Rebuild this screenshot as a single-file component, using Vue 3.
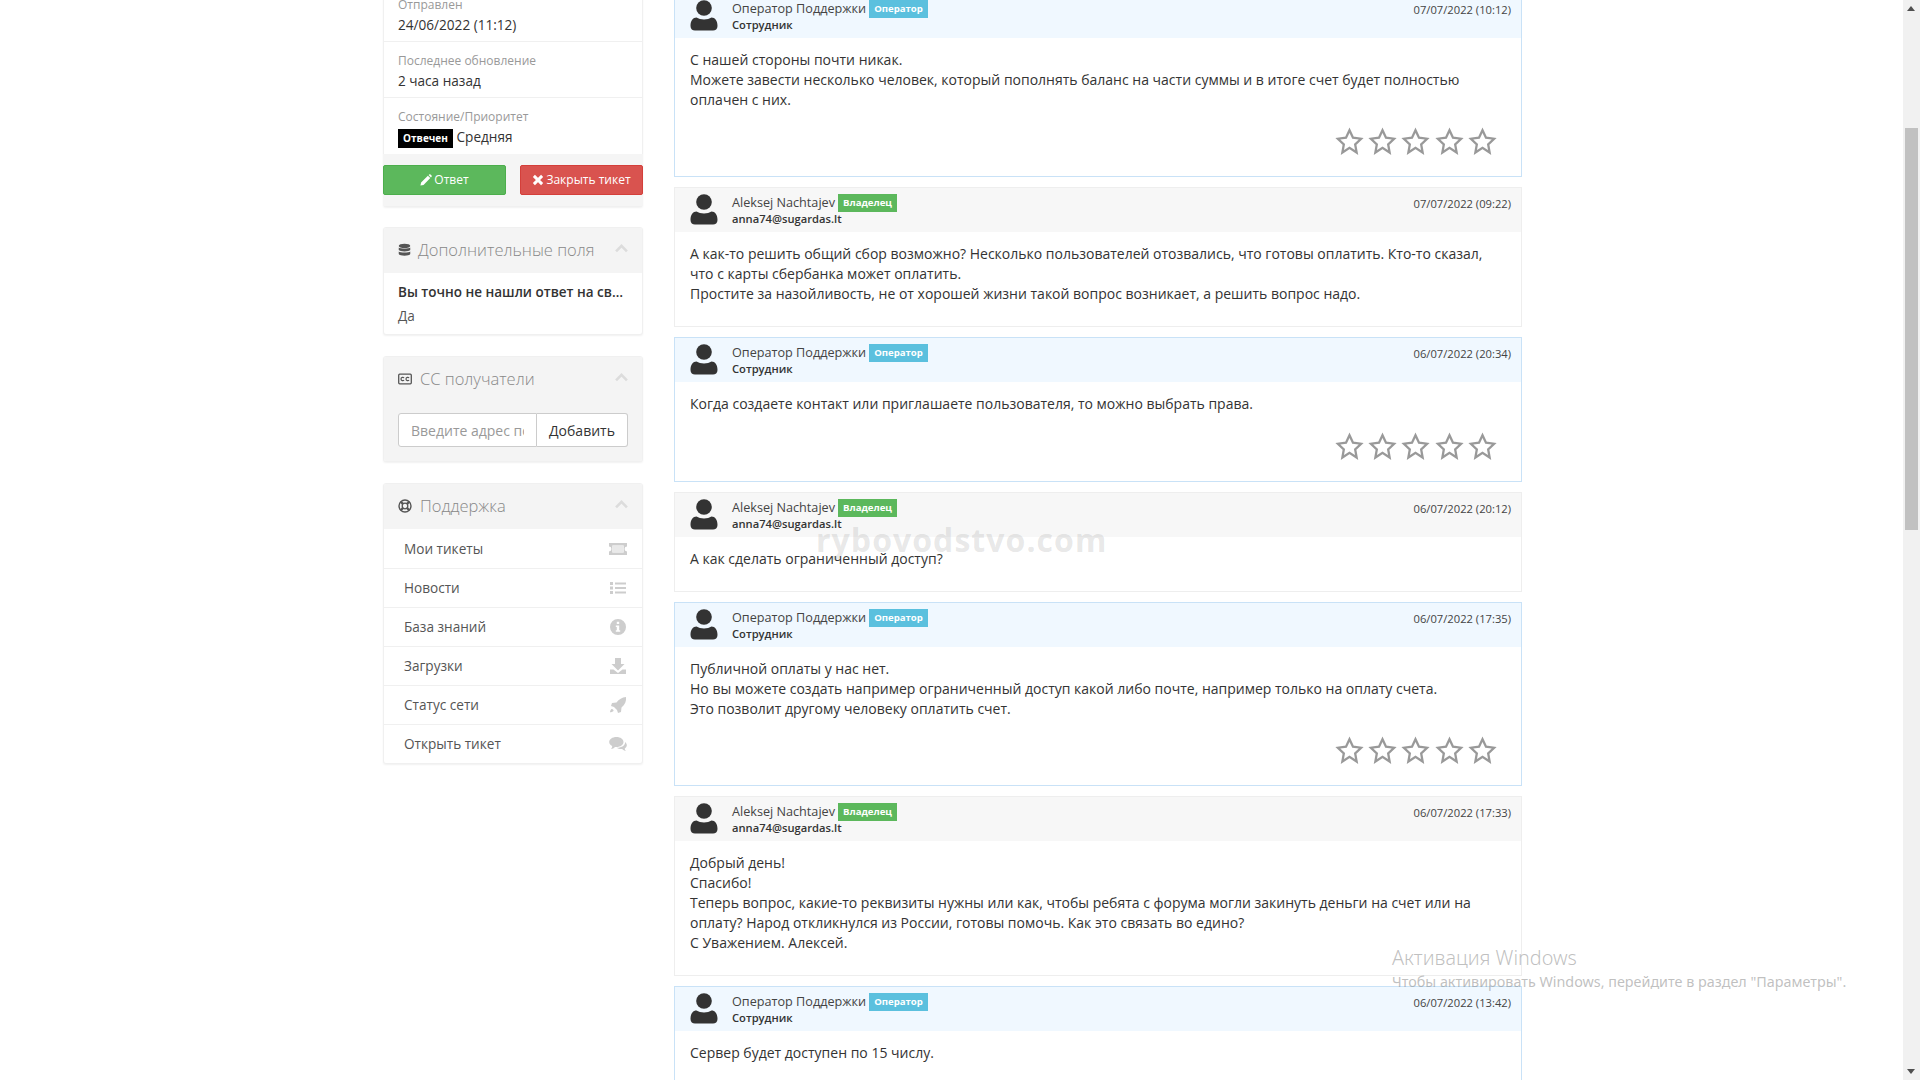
<script setup>
const info = [
  { label: 'Отправлен', value: '24/06/2022 (11:12)' },
  { label: 'Последнее обновление', value: '2 часа назад' },
]
const links = [
  { text: 'Мои тикеты', icon: 'ticket' },
  { text: 'Новости', icon: 'list' },
  { text: 'База знаний', icon: 'info' },
  { text: 'Загрузки', icon: 'download' },
  { text: 'Статус сети', icon: 'rocket' },
  { text: 'Открыть тикет', icon: 'comments' },
]
const op = { name: 'Оператор Поддержки', badge: 'Оператор', sub: 'Сотрудник', staff: true }
const owner = { name: 'Aleksej Nachtajev', badge: 'Владелец', sub: 'anna74@sugardas.lt', staff: false }
const messages = [
  { who: op, date: '07/07/2022 (10:12)', lines: ['С нашей стороны почти никак.', 'Можете завести несколько человек, который пополнять баланс на части суммы и в итоге счет будет полностью оплачен с них.'] },
  { who: owner, date: '07/07/2022 (09:22)', lines: ['А как-то решить общий сбор возможно? Несколько пользователей отозвались, что готовы оплатить. Кто-то сказал, что с карты сбербанка может оплатить.', 'Простите за назойливость, не от хорошей жизни такой вопрос возникает, а решить вопрос надо.'] },
  { who: op, date: '06/07/2022 (20:34)', lines: ['Когда создаете контакт или приглашаете пользователя, то можно выбрать права.'] },
  { who: owner, date: '06/07/2022 (20:12)', lines: ['А как сделать ограниченный доступ?'] },
  { who: op, date: '06/07/2022 (17:35)', lines: ['Публичной оплаты у нас нет.', 'Но вы можете создать например ограниченный доступ какой либо почте, например только на оплату счета.', 'Это позволит другому человеку оплатить счет.'] },
  { who: owner, date: '06/07/2022 (17:33)', lines: ['Добрый день!', 'Спасибо!', 'Теперь вопрос, какие-то реквизиты нужны или как, чтобы ребята с форума могли закинуть деньги на счет или на оплату? Народ откликнулся из России, готовы помочь. Как это связать во едино?', 'С Уважением. Алексей.'] },
  { who: op, date: '06/07/2022 (13:42)', lines: ['Сервер будет доступен по 15 числу.'] },
]
const starPath = 'M12 2.6l2.9 6.2 6.7.9-4.9 4.7 1.2 6.7L12 17.2l-5.9 3.9 1.2-6.7-4.9-4.7 6.7-.9z'
</script>

<template>
  <div class="page">
    <div class="content">
      <aside class="sidebar">
        <section class="card">
          <div v-for="row in info" :key="row.label" class="info-row">
            <div class="info-label">{{ row.label }}</div>
            <div class="info-value">{{ row.value }}</div>
          </div>
          <div class="info-row status-row">
            <div class="info-label">Состояние/Приоритет</div>
            <div class="info-value"><span class="status">Отвечен</span> Средняя</div>
          </div>
          <div class="actions">
            <button class="btn green">
              <svg class="btn-icon" viewBox="0 0 14 14"><path fill="currentColor" d="M0.5 13.5l0.8-3.6L9.2 2l2.8 2.8-7.9 7.9zM10 1.2l0.8-0.7c0.4-0.4 1-0.4 1.4 0l1.3 1.3c0.4 0.4 0.4 1 0 1.4l-0.7 0.8z"/></svg>
              Ответ
            </button>
            <button class="btn red">
              <svg class="btn-icon" viewBox="0 0 14 14"><path fill="none" stroke="currentColor" stroke-width="3.4" d="M2.2 2.2l9.6 9.6M11.8 2.2l-9.6 9.6"/></svg>
              Закрыть тикет
            </button>
          </div>
        </section>

        <section class="card">
          <header class="panel-head">
            <svg class="head-icon db" viewBox="0 0 14 14"><g fill="#555"><ellipse cx="7" cy="2.6" rx="6.2" ry="2.4"/><path d="M.8 4.4c1 1.6 11.4 1.6 12.4 0v2.600c-1 2-11.4 2-12.4 0z"/><path d="M.8 8.600c1 1.600 11.400 1.600 12.400 0v2.600c-.6 2.600-11.800 2.600-12.400 0z"/></g></svg>
            <span class="head-title">Дополнительные поля</span>
            <svg class="chev" viewBox="0 0 12 8"><path fill="none" stroke="#dcdcdc" stroke-width="2.400" d="M1 6.600l5-5 5 5"/></svg>
          </header>
          <div class="field-body">
            <div class="field-name">Вы точно не нашли ответ на свой вопрос в базе знаний?</div>
            <div class="field-value">Да</div>
          </div>
        </section>

        <section class="card">
          <header class="panel-head">
            <svg class="head-icon cc" viewBox="0 0 14 12"><rect x=".7" y="1.200" width="12.600" height="9.600" rx="1" fill="none" stroke="#555" stroke-width="1.300"/><path fill="none" stroke="#555" stroke-width="1.200" d="M6 5c-.6-1-3-1-3 1s2.400 2 3 1M11 5c-.6-1-3-1-3 1s2.400 2 3 1"/></svg>
            <span class="head-title">CC получатели</span>
            <svg class="chev" viewBox="0 0 12 8"><path fill="none" stroke="#dcdcdc" stroke-width="2.400" d="M1 6.600l5-5 5 5"/></svg>
          </header>
          <div class="cc-body">
            <input class="cc-input" placeholder="Введите адрес почты" />
            <button class="cc-add">Добавить</button>
          </div>
        </section>

        <section class="card">
          <header class="panel-head">
            <svg class="head-icon ring" viewBox="0 0 14 14"><circle cx="7" cy="7" r="6" fill="none" stroke="#555" stroke-width="1.400"/><circle cx="7" cy="7" r="2.800" fill="none" stroke="#555" stroke-width="1.300"/><path stroke="#555" stroke-width="2.200" d="M2.800 2.800l2.300 2.300M11.200 2.800L8.900 5.100M2.800 11.200l2.300-2.300M11.200 11.200L8.900 8.900"/></svg>
            <span class="head-title">Поддержка</span>
            <svg class="chev" viewBox="0 0 12 8"><path fill="none" stroke="#dcdcdc" stroke-width="2.400" d="M1 6.600l5-5 5 5"/></svg>
          </header>
          <nav class="links">
            <a v-for="l in links" :key="l.text" class="link">
              <span>{{ l.text }}</span>
              <svg class="link-icon" viewBox="0 0 18 16" fill="#cdcdcd">
                <g v-if="l.icon === 'ticket'">
                  <path fill-rule="evenodd" d="M0 2h18v3.600a2.400 2.400 0 0 0 0 4.800V14H0v-3.600a2.400 2.400 0 0 0 0-4.800zM3.400 4.600v6.800h11.200V4.600z"/>
                  <rect x="3.400" y="4.600" width="11.200" height="6.800" fill="#e9e9e9"/>
                </g>
                <path v-else-if="l.icon === 'list'" d="M1 2h3v3H1zM6 2.500h11v2H6zM1 6.500h3v3H1zM6 7h11v2H6zM1 11h3v3H1zM6 11.500h11v2H6z"/>
                <path v-else-if="l.icon === 'info'" fill-rule="evenodd" d="M9 0a8 8 0 1 1 0 16A8 8 0 0 1 9 0zM7.800 2.800v2.200h2.400V2.800zM6.800 6.500v1.500h1v3.200h-1v1.500h4.400v-1.500h-1V6.500z"/>
                <path v-else-if="l.icon === 'download'" d="M6 0h6v6h3.500L9 12.500 2.500 6H6zM1 11.500h3.500L9 15l4.500-3.500H17V16H1z"/>
                <path v-else-if="l.icon === 'rocket'" d="M17 0c.5 4-1 8-4.500 10.500L12 15l-3 1-1-3-3-3-3-1 1-3 4.500-.5C10 2 13 .5 17 0zM2.500 12c1-.5 2.500 1 2 2-.8 1-2.500 1.200-3.500 1.200 0-1 .5-2.500 1.500-3.200z"/>
                <path v-else d="M7.500 1c4 0 7 2.200 7 5s-3 5-7 5l-1.500-.1C5 12 3.500 12.800 2 13c.7-.8 1.200-1.800 1.200-3C1.300 9 .2 7.600.2 6c0-2.800 3.200-5 7.300-5zM16 6c1.200 1 1.800 2 1.800 3.200 0 1.300-.8 2.400-2 3.200 0 1 .5 2 1.200 2.600-1.500-.2-3-1-3.800-2-2 .3-4.200-.3-5.500-1.200 4.500.2 9-2.400 8.300-5.800z"/>
              </svg>
            </a>
          </nav>
        </section>
      </aside>

      <main class="thread">
        <article v-for="m in messages" :key="m.date" class="msg" :class="{ staff: m.who.staff }">
          <header class="msg-head">
            <svg class="avatar" viewBox="0 0 28 31"><circle cx="14" cy="8" r="7.800" fill="#333"/><path fill="#333" d="M0.500 26c0-5.500 2.500-8.500 6-8.500 2 1.300 4.500 2 7.500 2s5.500-.7 7.500-2c3.500 0 6 3 6 8.500 0 3-2 4.500-4.500 4.500H5c-2.500 0-4.500-1.500-4.500-4.500z"/></svg>
            <div class="who">
              <div class="who-name">
                <span>{{ m.who.name }}</span>
                <span class="role">{{ m.who.badge }}</span>
              </div>
              <div class="who-sub">{{ m.who.sub }}</div>
            </div>
            <time class="date">{{ m.date }}</time>
          </header>
          <div class="msg-body">
            <div v-for="(line, i) in m.lines" :key="i">{{ line }}</div>
            <div v-if="m.who.staff" class="stars">
              <svg v-for="n in 5" :key="n" class="star" viewBox="0 0 24 24"><path :d="starPath" fill="none" stroke="#999" stroke-width="1.900" stroke-linejoin="miter"/></svg>
            </div>
          </div>
        </article>
      </main>
    </div>

    <div class="scrollbar">
      <span class="arrow up"></span>
      <span class="thumb"></span>
      <span class="arrow down"></span>
    </div>

    <div class="watermark">rybovodstvo.com</div>
    <div class="activation">
      <div class="act-title">Активация Windows</div>
      <div class="act-sub">Чтобы активировать Windows, перейдите в раздел "Параметры".</div>
    </div>
  </div>
</template>

<style>
html, body { margin: 0; background: #fff; overflow: hidden; }
</style>

<style scoped>
.page {
  position: relative;
  width: 1920px;
  height: 1080px;
  overflow: hidden;
  display: flex;
  background: #fff;
  color: #333;
  font-family: "Open Sans", "Noto Sans", sans-serif;
  font-size: 14px;
  line-height: 20px;
}
.content {
  flex: 1;
  display: flex;
  align-items: flex-start;
  gap: 31px;
  padding-left: 383px;
  margin-top: -15px;
}
.sidebar { width: 260px; display: flex; flex-direction: column; gap: 20px; flex: none; font-size: 13.600px; }
.card {
  background: #fff;
  border: 1px solid #f0f0f0;
  border-radius: 3px;
  box-shadow: 0 1px 2px rgba(0,0,0,.06);
  box-sizing: border-box;
}
.card + .card + .card { margin-top: 1px; }
.info-row {
  height: 56px;
  box-sizing: border-box;
  padding: 10px 14px 0;
  border-bottom: 1px solid #f0f0f0;
}
.status-row { border-bottom: 0; }
.info-label { color: #999; font-size: 12px; line-height: 18px; }
.info-value { line-height: 22px; }
.status {
  display: inline-block;
  background: #000;
  color: #fff;
  font-size: 10px;
  font-weight: 700;
  line-height: 19px;
  width: 55px;
  text-align: center;
  margin: 0;
  vertical-align: 0;
}
.actions {
  background: #f5f5f5;
  display: flex;
  justify-content: space-between;
  padding: 11px 0;
  margin: 0 -1px;
}
.btn {
  width: 123px;
  height: 30px;
  border: 1px solid transparent;
  border-radius: 2px;
  color: #fff;
  font: 12px/18px "Open Sans", sans-serif;
  padding: 0;
  display: flex;
  align-items: center;
  justify-content: center;
  gap: 2px;
}
.btn-icon { width: 12px; height: 12px; }
.green { background: #5cb85c; border-color: #4cae4c; }
.red { background: #d9534f; border-color: #d43f3a; }
.panel-head {
  height: 45px;
  background: #f4f4f4;
  border-radius: 2px 2px 0 0;
  display: flex;
  align-items: center;
  padding: 0 14px 1px;
  box-sizing: border-box;
  position: relative;
}
.head-title { color: #888; font-size: 16.500px; font-weight: 300; margin-left: 7px; }
.head-icon { flex: none; }
.db { width: 13px; height: 14px; }
.cc { width: 14px; height: 12px; margin-right: 1px; }
.ring { width: 14px; height: 14px; margin-right: 1px; }
.chev { position: absolute; right: 14px; top: 16px; width: 13px; height: 9px; }
.field-body { padding: 7px 14px 6px; }
.field-name {
  font-weight: 600;
  font-size: 13.500px;
  line-height: 24px;
  white-space: nowrap;
  overflow: hidden;
  text-overflow: ellipsis;
}
.field-value { line-height: 24px; color: #555; }
.cc-body {
  background: #f4f4f4;
  padding: 11px 14px 14px;
  display: flex;
  border-radius: 0 0 2px 2px;
}
.cc-input {
  width: 139px;
  height: 34px;
  box-sizing: border-box;
  border: 1px solid #ccc;
  border-radius: 3px 0 0 3px;
  padding: 0 12px;
  font: 14px "Open Sans", sans-serif;
  outline: none;
  background: #fff;
}
.cc-input::placeholder { color: #999; opacity: 1; }
.cc-add {
  flex: 1;
  height: 34px;
  border: 1px solid #ccc;
  border-left: 0;
  border-radius: 0 3px 3px 0;
  background: #fff;
  color: #333;
  font: 14px "Open Sans", sans-serif;
  padding: 0;
}
.links { display: flex; flex-direction: column; }
.link {
  height: 39px;
  box-sizing: border-box;
  padding: 0 15px 0 20px;
  display: flex;
  align-items: center;
  justify-content: space-between;
  color: #555;
  border-top: 1px solid #f0f0f0;
}
.link:first-child { border-top: 0; }
.link-icon { width: 18px; height: 16px; }

.thread { width: 848px; flex: none; display: flex; flex-direction: column; gap: 10px; padding-top: 7.500px; }
.msg { border: 1px solid #eee; background: #fff; box-sizing: border-box; }
.msg.staff { border-color: #c9e2f7; }
.msg-head {
  height: 44px;
  background: #f7f7f7;
  display: flex;
  align-items: flex-start;
  padding: 0 10px 0 15px;
  box-sizing: border-box;
}
.msg.staff .msg-head { background: #f0f8ff; }
.avatar { width: 28px; height: 31px; flex: none; margin-top: 6px; }
.who { margin-left: 14px; margin-top: 4px; }
.who-name { display: flex; align-items: flex-start; gap: 3px; line-height: 20px; color: #444; font-size: 12.650px; }
.role {
  color: #fff;
  font-size: 9.600px;
  font-weight: 700;
  line-height: 18px;
  padding: 0 5px;
  background: #5cb85c;
  margin-top: 2px;
}
.msg.staff .role { background: #5bc0de; }
.who-sub { font-size: 11.200px; font-weight: 600; line-height: 14px; color: #333; }
.date { margin-left: auto; font-size: 11.200px; margin-top: 6px; color: #444; }
.msg-body { padding: 12px 15px 22px; color: #333; }
.msg.staff .msg-body { padding-bottom: 18.500px; }
.stars { display: flex; justify-content: flex-end; align-items: center; gap: 4.300px; margin-top: 16px; padding-right: 9px; height: 32px; }
.star { width: 29px; height: 29px; }
.scrollbar {
  position: relative;
  width: 17px;
  flex: none;
  background: #f1f1f1;
}
.thumb { position: absolute; left: 2px; top: 128px; width: 13px; height: 402px; background: #c1c1c1; }
.arrow { position: absolute; left: 4px; width: 0; height: 0; border-left: 4px solid transparent; border-right: 4px solid transparent; }
.up { top: 6px; border-bottom: 5px solid #505050; }
.down { bottom: 6px; border-top: 5px solid #505050; }
.watermark {
  position: absolute;
  left: 816px;
  top: 516px;
  color: rgba(120,120,120,.18);
  font-size: 32px;
  line-height: 48px;
  font-weight: 700;
  letter-spacing: 1.050px;
  pointer-events: none;
}
.activation { position: absolute; left: 1392px; top: 944px; color: rgba(130,130,130,.5); pointer-events: none; font-family: "Noto Sans", sans-serif; }
.act-title { font-size: 19.800px; line-height: 28px; font-weight: 300; }
.act-sub { font-size: 14.350px; line-height: 20px; }
</style>
